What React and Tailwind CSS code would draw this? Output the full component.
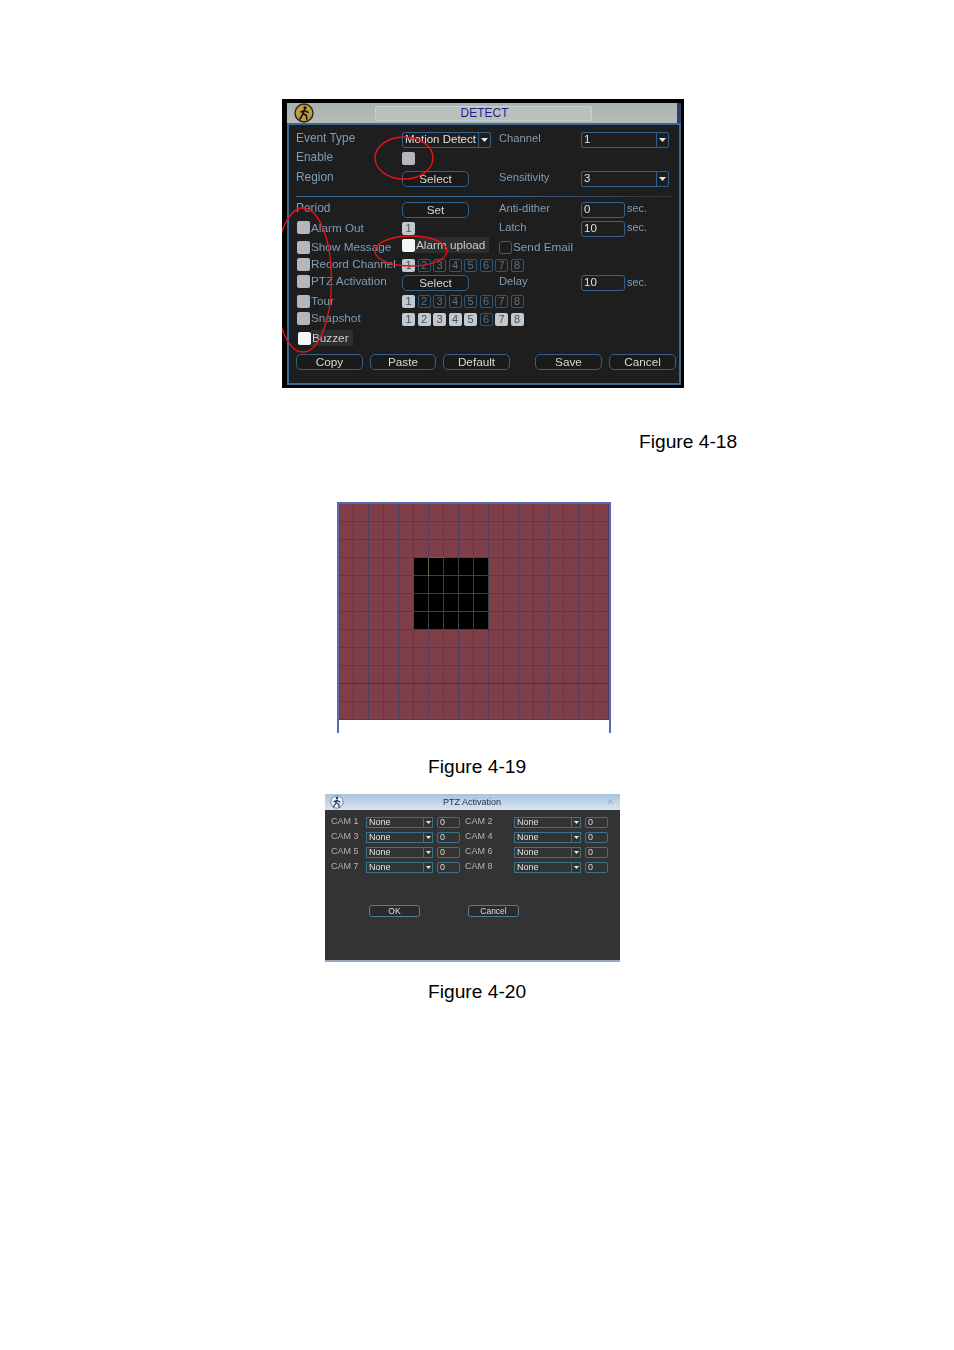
import React from 'react';

const font = { fontFamily: '"Liberation Sans", Arial, sans-serif' };

const Arrow = () => (
    <svg width="7" height="4" viewBox="0 0 7 4"><path d="M0 0h7L3.5 4z" fill="#e8e8e8" /></svg>
);

// Title bar emblem: gold disc with a running figure
const DetectIcon = () => (
    <svg width="20" height="20" viewBox="0 0 20 20" className="shrink-0">
        <circle cx="10" cy="10" r="9" fill="#c49a45" stroke="#2a2418" strokeWidth="1.4" />
        <circle cx="11" cy="4.8" r="1.6" fill="#111" />
        <path d="M10.5 7 8.6 11.5 6 16M9.2 10.5l3.2 2 .4 3.8M10.5 7.4 7 9M10.5 7.4l3.6 2" fill="none" stroke="#111" strokeWidth="1.6" strokeLinecap="round" />
    </svg>
);

const PtzIcon = () => (
    <svg width="18" height="16" viewBox="0 0 18 16" className="shrink-0">
        <circle cx="9" cy="8" r="6.2" fill="#eef3f7" stroke="#6d86a0" strokeWidth="1" />
        <circle cx="9" cy="4" r="1.3" fill="#24384f" />
        <path d="M9 6 7.6 9.5 5.5 13M8.3 8.8l2.5 1.6.3 2.8M9 6.4 6 7.6M9 6.4l3 1.6" fill="none" stroke="#24384f" strokeWidth="1.2" strokeLinecap="round" />
    </svg>
);

const Label = ({ children, right }) => (
    <span className={`-translate-y-px leading-none text-[#7f9db5] whitespace-nowrap ${right ? 'text-[11.2px]' : 'text-[11.9px]'}`}>{children}</span>
);

const Check = ({ white, children, strip, className = '' }) => (
    <div className={`flex items-center ${className}`}>
        <span className={`w-[13px] h-[13px] rounded-[2px] shrink-0 ${white ? 'bg-[#f2f8f6]' : 'bg-[#b4b6ba]'}`}></span>
        <span className={`pl-px pr-1 py-[2px] text-[11.75px] leading-none whitespace-nowrap ${strip ? 'bg-[#2e2e2e] text-[#c4ccd2]' : 'text-[#7f9db5]'}`}>
            {children}
        </span>
    </div>
);

const Btn = ({ children, className = 'w-[67px]' }) => (
    <div className={`h-[16px] rounded-[5px] border border-[#34618a] bg-[#1a1a1a] flex items-center justify-center text-[11.75px] leading-none text-[#d8d8d8] ${className}`}>
        {children}
    </div>
);

const Select = ({ value, className }) => (
    <div className={`h-[16px] border border-[#34618a] rounded-[2px] flex items-center text-[11.5px] leading-none text-[#e0e0e0] ${className}`}>
        <span className="flex-1 pl-[2px] whitespace-nowrap overflow-hidden">{value}</span>
        <span className="w-[12px] h-full border-l border-[#34618a] flex items-center justify-center"><Arrow /></span>
    </div>
);

const Input = ({ value }) => (
    <div className="flex items-center gap-[2px]">
        <div className="w-[44px] h-[16px] border border-[#34618a] rounded-[3px] pl-[2px] flex items-center text-[11.5px] leading-none text-[#e0e0e0]">{value}</div>
        <span className="-translate-y-px text-[11px] leading-none text-[#7f9db5]">sec.</span>
    </div>
);

const Boxes = ({ on }) => (
    <div className="flex gap-[2.5px]">
        {[1, 2, 3, 4, 5, 6, 7, 8].map((n) => (
            <span
                key={n}
                className={`w-[13px] h-[13px] rounded-[2px] flex items-center justify-center text-[11px] leading-none ${
                    on.includes(n) ? 'bg-[#c3c8cc] text-[#3c5468]' : 'border border-[#2f5876] text-[#55728a]'
                }`}
            >
                {n}
            </span>
        ))}
    </div>
);

const Row = ({ h, children }) => (
    <div className={`grid grid-cols-[106px_97px_82px_1fr] items-center ${h}`}>{children}</div>
);

const DetectDialog = () => (
    <div className="relative ml-[282px] w-[402px] h-[289px] bg-black pl-[5px] pt-[4px] pr-[3px] pb-[3px] flex flex-col" style={font}>
        <div className="blur-[0.35px] flex flex-col flex-1 min-h-0">
            {/* Title */}
            <div className="h-[20px] shrink-0 flex items-center pl-[7px] bg-gradient-to-b from-[#a9b0ae] to-[#b7bdba] border-r-4 border-[#2f3f63]">
                <DetectIcon />
                <div className="ml-[61px] w-[217px] h-[15px] pl-[2px] bg-[#b9c0be] border border-[#c9cfcd] rounded-[2px] flex items-center justify-center text-[12px] leading-none text-[#1c1c8c]">
                    DETECT
                </div>
            </div>

            {/* Body */}
            <div className="flex-1 border-2 border-[#3a6a92] bg-[#1e1e1e] pl-[7px] pt-[5px]">
                <Row h="h-[19px]">
                    <Label>Event Type</Label>
                    <Select value="Motion Detect" className="w-[89px]" />
                    <Label right>Channel</Label>
                    <Select value="1" className="w-[88px]" />
                </Row>
                <Row h="h-[19px]">
                    <Label>Enable</Label>
                    <span className="w-[13px] h-[13px] rounded-[2px] bg-[#b4b6ba]"></span>
                </Row>
                <Row h="h-[22px]">
                    <Label>Region</Label>
                    <Btn>Select</Btn>
                    <Label right>Sensitivity</Label>
                    <Select value="3" className="w-[88px]" />
                </Row>

                <div className="mt-[6px] mb-[3px] mr-[8px] h-px bg-gradient-to-r from-[#3a6a92] via-[#3a6a92] to-[#33343a]"></div>

                <Row h="h-[19px]">
                    <Label>Period</Label>
                    <Btn>Set</Btn>
                    <Label right>Anti-dither</Label>
                    <Input value="0" />
                </Row>
                <Row h="h-[19px]">
                    <Check className="ml-px -translate-y-px">Alarm Out</Check>
                    <span className="w-[13px] h-[13px] rounded-[2px] bg-[#c3c8cc] text-[#3c5468] text-[11px] leading-none flex items-center justify-center">1</span>
                    <Label right>Latch</Label>
                    <Input value="10" />
                </Row>
                <Row h="h-[18px]">
                    <Check className="ml-px">Show Message</Check>
                    <Check white strip className="-translate-y-[2px]">Alarm upload</Check>
                    <div className="flex items-center">
                        <span className="w-[13px] h-[13px] rounded-[3px] border border-[#34618a] shrink-0"></span>
                        <span className="pl-px text-[11.75px] leading-none whitespace-nowrap text-[#7f9db5]">Send Email</span>
                    </div>
                </Row>
                <Row h="h-[18px]">
                    <Check className="ml-px -translate-y-px">Record Channel</Check>
                    <div className="col-span-2"><Boxes on={[1]} /></div>
                </Row>
                <Row h="h-[18px]">
                    <Check className="ml-px -translate-y-[2px]">PTZ Activation</Check>
                    <Btn>Select</Btn>
                    <Label right>Delay</Label>
                    <Input value="10" />
                </Row>
                <Row h="h-[18px]">
                    <Check className="ml-px">Tour</Check>
                    <div className="col-span-2"><Boxes on={[1]} /></div>
                </Row>
                <Row h="h-[18px]">
                    <Check className="ml-px -translate-y-px">Snapshot</Check>
                    <div className="col-span-2"><Boxes on={[1, 2, 3, 4, 5, 7, 8]} /></div>
                </Row>
                <Row h="h-[20px]">
                    <Check white strip className="ml-[2px]">Buzzer</Check>
                </Row>

                <div className="flex gap-[7px] mt-[6px]">
                    <Btn>Copy</Btn>
                    <Btn className="w-[66px]">Paste</Btn>
                    <Btn>Default</Btn>
                    <Btn className="w-[67px] ml-[18px]">Save</Btn>
                    <Btn>Cancel</Btn>
                </div>
            </div>
        </div>

        {/* Hand-drawn red marks lying over the dialog */}
        <svg className="absolute inset-0 pointer-events-none" width="402" height="289" viewBox="0 0 402 289" fill="none" stroke="#ee1018" strokeWidth="1.3">
            <ellipse cx="122" cy="59" rx="29" ry="21" />
            <ellipse cx="129" cy="152" rx="36" ry="15" />
            <ellipse cx="21" cy="181" rx="28.5" ry="72" />
        </svg>
    </div>
);

const cells = Array.from({ length: 216 }, (_, i) => i);

const MotionGrid = () => (
    <div className="ml-[337px] w-[274px] h-[231px] border-2 border-b-0 border-[#5a68b4]">
        <div className="grid grid-cols-[repeat(18,15px)] grid-rows-[repeat(12,18px)] w-[270px]">
            {cells.map((i) => {
                const row = Math.floor(i / 18);
                const col = i % 18;
                const black = row >= 3 && row <= 6 && col >= 5 && col <= 9;
                const green = row === 3 && col === 6;
                return (
                    <div
                        key={i}
                        className={`border-r border-b ${
                            black ? 'bg-black border-[#39414f]' : row === 9 ? 'bg-[#7f3f48] border-r-[#4e3d5f] border-b-[#3b3050]' : 'bg-[#7f3f48] border-[#4e3d5f]'
                        } ${green ? 'outline outline-[#5d6a40]' : ''}`}
                    ></div>
                );
            })}
        </div>
    </div>
);

const SmallSelect = () => (
    <div className="w-[67px] h-[11px] border border-[#3a7488] flex items-center text-[9px] leading-none text-[#e4e4e4]">
        <span className="flex-1 pl-[2px]">None</span>
        <span className="w-[9px] h-full border-l border-[#3a7488] flex items-center justify-center">
            <svg width="5" height="3" viewBox="0 0 5 3"><path d="M0 0h5L2.5 3z" fill="#e8e8e8" /></svg>
        </span>
    </div>
);

const SmallInput = () => (
    <div className="w-[23px] h-[11px] border border-[#3a7488] rounded-[2px] pl-[2px] flex items-center text-[9px] leading-none text-[#dcdcdc]">0</div>
);

const ptzRows = [
    ['CAM 1', 'CAM 2'],
    ['CAM 3', 'CAM 4'],
    ['CAM 5', 'CAM 6'],
    ['CAM 7', 'CAM 8'],
];

const PtzDialog = () => (
    <div className="ml-[325px] w-[295px] h-[168px] flex flex-col bg-[#333333] blur-[0.35px]" style={font}>
        <div className="h-[16px] shrink-0 flex items-center pl-[3px] pr-[5px] bg-gradient-to-b from-[#a9c4de] to-[#d9e5f0]">
            <PtzIcon />
            <div className="flex-1 text-center pr-[8px] text-[9px] leading-none text-[#1f2f44]">PTZ Activation</div>
            <span className="text-[10px] leading-none text-[#9fb0bf] pr-[1px]">✕</span>
        </div>
        <div className="flex-1 pl-[6px] pt-[5px] border-b-2 border-[#97aac2]">
            {ptzRows.map(([a, b]) => (
                <div key={a} className="h-[15px] flex items-center">
                    <span className="w-[35px] text-[9px] leading-none text-[#b4b4b4] -mt-[2px]">{a}</span>
                    <SmallSelect />
                    <span className="w-[4px]"></span>
                    <SmallInput />
                    <span className="w-[5px]"></span>
                    <span className="w-[49px] text-[9px] leading-none text-[#b4b4b4] -mt-[2px]">{b}</span>
                    <SmallSelect />
                    <span className="w-[4px]"></span>
                    <SmallInput />
                </div>
            ))}
            <div className="flex gap-[48px] ml-[38px] mt-[30px]">
                <div className="w-[51px] h-[12px] rounded-[3px] border border-[#4f8098] bg-[#2b2b2b] flex items-center justify-center text-[8.5px] leading-none text-[#dcdcdc]">OK</div>
                <div className="w-[51px] h-[12px] rounded-[3px] border border-[#4f8098] bg-[#2b2b2b] flex items-center justify-center text-[8.5px] leading-none text-[#dcdcdc]">Cancel</div>
            </div>
        </div>
    </div>
);

const Caption = ({ children, className }) => (
    <div className={`text-[19.2px] leading-[22px] text-black ${className}`} style={font}>{children}</div>
);

export default function App() {
    return (
        <div className="w-[954px] h-[1350px] bg-white pt-[99px] flex flex-col overflow-hidden">
            <DetectDialog />
            <Caption className="mt-[43px] ml-[639px]">Figure 4-18</Caption>
            <div className="mt-[49px]"><MotionGrid /></div>
            <Caption className="mt-[23px] ml-[428px]">Figure 4-19</Caption>
            <div className="mt-[16px]"><PtzDialog /></div>
            <Caption className="mt-[19px] ml-[428px]">Figure 4-20</Caption>
        </div>
    );
}
